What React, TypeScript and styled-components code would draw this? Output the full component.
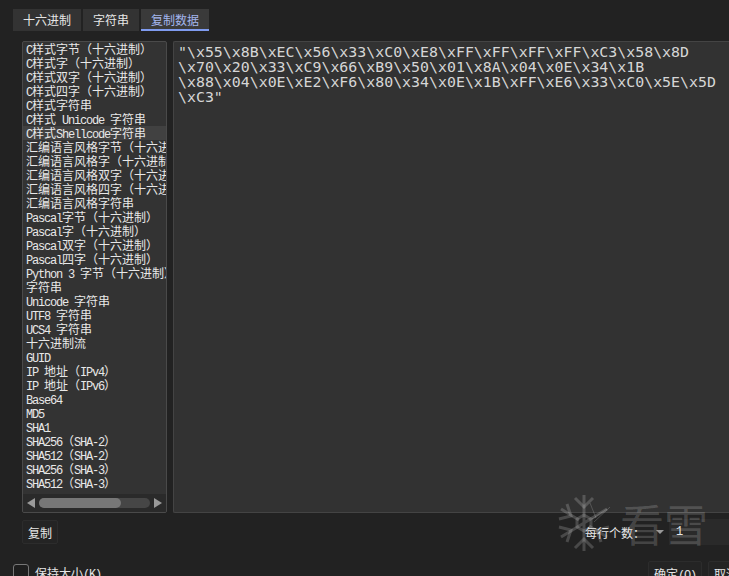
import * as React from "react";
import styled, { createGlobalStyle } from "styled-components";

const cjk = `"Noto Sans CJK SC", sans-serif`;

const GlobalStyle = createGlobalStyle`
  html, body {
    margin: 0;
    height: 100%;
    overflow: hidden;
    background: #222222;
  }
`;

const Page = styled.div`
  position: relative;
  width: 729px;
  height: 576px;
  overflow: hidden;
  background: #222222;
  color: #e6e6e6;
  font-family: ${cjk};
  font-size: 12px;
  box-sizing: border-box;
  padding-top: 9px;
`;

const TabBar = styled.div`
  display: flex;
  gap: 2px;
  padding-left: 13px;
  height: 22px;
`;

const Tab = styled.div<{ $active?: boolean }>`
  padding: 0 10px;
  height: 22px;
  line-height: 21px;
  box-sizing: border-box;
  background: ${(p) => (p.$active ? "#3a3a3a" : "#333333")};
  color: ${(p) => (p.$active ? "#a4b6ee" : "#e6e6e6")};
  border-bottom: ${(p) => (p.$active ? "2px solid #7f9bef" : "none")};
`;

const Body = styled.div`
  display: flex;
  gap: 6px;
  height: 472px;
  margin-top: 10px;
  padding-left: 22px;
`;

const ListPanel = styled.div`
  width: 145px;
  flex: none;
  display: flex;
  flex-direction: column;
  box-sizing: border-box;
  border: 1px solid #4a4a4a;
  border-radius: 2px;
  background: #333333;
  overflow: hidden;
`;

const Rows = styled.div`
  flex: 1;
  overflow: hidden;
`;

const Row = styled.div<{ $selected?: boolean }>`
  height: 14px;
  line-height: 14px;
  padding-left: 3px;
  white-space: nowrap;
  font-size: 12px;
  color: #e8e8e8;
  background: ${(p) => (p.$selected ? "#414141" : "transparent")};
`;

const Latin = styled.span`
  font-family: "Liberation Mono", monospace;
  font-size: 12px;
  letter-spacing: -1.2px;
`;

const ScrollBar = styled.div`
  height: 18px;
  flex: none;
  display: flex;
  align-items: center;
  gap: 4px;
  padding: 0 4px;
  background: #2a2a2a;
`;

const ScrollTrack = styled.div`
  flex: 1;
  height: 10px;
  border-radius: 5px;
  background: #464646;
`;

const ScrollThumb = styled.div`
  width: 82px;
  height: 10px;
  border-radius: 5px;
  background: #777777;
`;

const Arrow = styled.div<{ $right?: boolean }>`
  width: 0;
  height: 0;
  border-top: 5px solid transparent;
  border-bottom: 5px solid transparent;
  ${(p) =>
    p.$right
      ? "border-left: 8px solid #9a9a9a;"
      : "border-right: 8px solid #9a9a9a;"}
`;

const OutputPanel = styled.div`
  flex: 1;
  box-sizing: border-box;
  border: 1px solid #444444;
  border-right: none;
  border-radius: 2px 0 0 2px;
  background: #323232;
  padding: 3px 4px;
  font-family: "DejaVu Sans Mono", monospace;
  font-size: 14.9px;
  line-height: 15px;
  color: #d6d6d6;
  white-space: pre;
`;

const Toolbar = styled.div`
  display: flex;
  align-items: center;
  height: 26px;
  margin-top: 6px;
  padding-left: 22px;
`;

const Button = styled.div`
  height: 24px;
  line-height: 23px;
  padding: 0 5px;
  box-sizing: border-box;
  border: 1px solid #2c2c2c;
  border-radius: 2px;
  background: #242424;
  white-space: nowrap;
`;

const PerRow = styled.div`
  margin-left: auto;
  display: flex;
  align-items: center;
`;

const PerRowInput = styled.div`
  width: 60px;
  height: 26px;
  line-height: 26px;
  margin-left: 5px;
  background: #2a2a2a;
  font-family: "Liberation Mono", monospace;
  font-size: 12px;
  padding-left: 7px;
  box-sizing: border-box;
`;

const Caret = styled.div`
  width: 0;
  height: 0;
  margin-left: 11px;
  border-left: 4px solid transparent;
  border-right: 4px solid transparent;
  border-top: 4px solid #999999;
`;

const Footer = styled.div`
  display: flex;
  align-items: center;
  height: 24px;
  margin-top: 16px;
  margin-right: -33px;
  padding-left: 13px;
  gap: 6px;
`;

const Check = styled.div`
  width: 16px;
  height: 16px;
  margin-top: -2px;
  box-sizing: border-box;
  border: 1px solid #777777;
  border-radius: 3px;
  background: #1e1e1e;
`;

const Spacer = styled.div`
  flex: 1;
`;

const Watermark = styled.div`
  position: absolute;
  left: 558px;
  top: 494px;
  display: flex;
  align-items: center;
  gap: 8px;
  pointer-events: none;
`;

const WatermarkText = styled.div`
  font-size: 44px;
  line-height: 54px;
  color: rgba(255, 255, 255, 0.18);
`;

const items = [
  "C样式字节（十六进制）",
  "C样式字（十六进制）",
  "C样式双字（十六进制）",
  "C样式四字（十六进制）",
  "C样式字符串",
  "C样式 Unicode 字符串",
  "C样式Shellcode字符串",
  "汇编语言风格字节（十六进制）",
  "汇编语言风格字（十六进制）",
  "汇编语言风格双字（十六进制）",
  "汇编语言风格四字（十六进制）",
  "汇编语言风格字符串",
  "Pascal字节（十六进制）",
  "Pascal字（十六进制）",
  "Pascal双字（十六进制）",
  "Pascal四字（十六进制）",
  "Python 3 字节（十六进制）",
  "字符串",
  "Unicode 字符串",
  "UTF8 字符串",
  "UCS4 字符串",
  "十六进制流",
  "GUID",
  "IP 地址（IPv4）",
  "IP 地址（IPv6）",
  "Base64",
  "MD5",
  "SHA1",
  "SHA256（SHA-2）",
  "SHA512（SHA-2）",
  "SHA256（SHA-3）",
  "SHA512（SHA-3）",
];

const output = [
  '"\\x55\\x8B\\xEC\\x56\\x33\\xC0\\xE8\\xFF\\xFF\\xFF\\xFF\\xC3\\x58\\x8D',
  "\\x70\\x20\\x33\\xC9\\x66\\xB9\\x50\\x01\\x8A\\x04\\x0E\\x34\\x1B",
  "\\x88\\x04\\x0E\\xE2\\xF6\\x80\\x34\\x0E\\x1B\\xFF\\xE6\\x33\\xC0\\x5E\\x5D",
  '\\xC3"',
];

// latin runs are narrower than the cjk ones in this list
const Label = ({ text }: { text: string }) => (
  <>
    {text.split(/([\x20-\x7e]+)/).map((part, i) =>
      i % 2 ? <Latin key={i}>{part}</Latin> : part
    )}
  </>
);

const Snowflake = () => (
  <svg width="54" height="58" viewBox="0 0 54 58" fill="none" stroke="rgba(255,255,255,0.18)" strokeWidth="3">
    <path d="M26 1V57M3 15L21 26M31 32L49 43M3 43L49 15" />
    <path d="M17 4L26 13L35 4M17 54L26 45L35 54" />
    <path d="M1 25L13 22L9 10M1 33L13 36L9 48M51 33L39 36L43 48" />
    <path d="M26 21L33 25V33L26 37L19 33V25Z" />
    <path d="M32 9L38 24M36 28L52 13M34 25L49 15" strokeWidth="1" />
  </svg>
);

export default function App() {
  return (
    <Page>
      <GlobalStyle />
      <TabBar>
        <Tab>十六进制</Tab>
        <Tab>字符串</Tab>
        <Tab $active>复制数据</Tab>
      </TabBar>
      <Body>
        <ListPanel>
          <Rows>
            {items.map((item) => (
              <Row key={item} $selected={item === "C样式Shellcode字符串"}>
                <Label text={item} />
              </Row>
            ))}
          </Rows>
          <ScrollBar>
            <Arrow />
            <ScrollTrack>
              <ScrollThumb />
            </ScrollTrack>
            <Arrow $right />
          </ScrollBar>
        </ListPanel>
        <OutputPanel>
          {output.map((line) => (
            <div key={line}>{line}</div>
          ))}
        </OutputPanel>
      </Body>
      <Toolbar>
        <Button>复制</Button>
        <PerRow>
          每行个数：
          <Caret />
          <PerRowInput>1</PerRowInput>
        </PerRow>
      </Toolbar>
      <Footer>
        <Check />
        <span>
          <Label text="保持大小(K)" />
        </span>
        <Spacer />
        <Button>
          <Label text="确定(O)" />
        </Button>
        <Button>
          <Label text="取消(C)" />
        </Button>
      </Footer>
      <Watermark>
        <Snowflake />
        <WatermarkText>看雪</WatermarkText>
      </Watermark>
    </Page>
  );
}
